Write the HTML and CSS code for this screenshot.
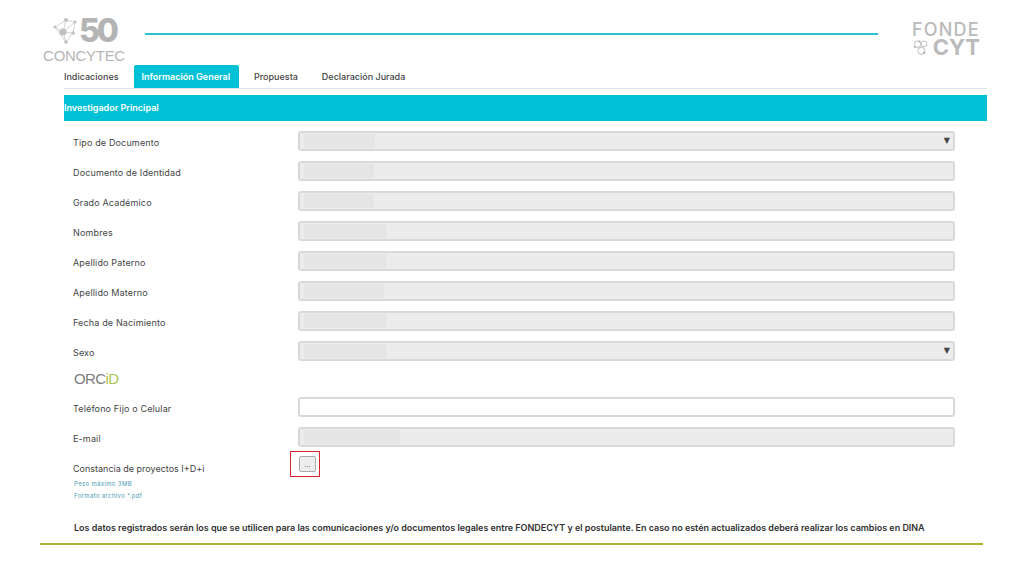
FILE: index.html
```html
<!DOCTYPE html>
<html lang="es">
<head>
    <meta charset="UTF-8">
    <meta name="viewport" content="width=device-width, initial-scale=1.0">
    <title>Información General - FONDECYT</title>
    <link rel="stylesheet" href="styles.css">
</head>
<body>
    <!-- Header -->
    <header class="header">
        <div class="logo-concytec">
            <div class="logo-top">
                <svg class="logo-net" width="26" height="28" viewBox="0 0 26 28">
                    <path d="M14 3 L3 10 L11 15 L23 5 L14 3 M11 15 L14 3 M11 15 L21 16 L14 25 L11 15 M23 5 L21 16 M3 10 L14 25" stroke="#d4d4d4" stroke-width="1" fill="none"/>
                    <g fill="#c0c0c0">
                        <circle cx="14" cy="3" r="2"/>
                        <circle cx="23" cy="5" r="1.5"/>
                        <circle cx="3" cy="10" r="1.6"/>
                        <circle cx="11" cy="15" r="3.6"/>
                        <circle cx="21" cy="16" r="1.8"/>
                        <circle cx="14" cy="25" r="1.8"/>
                    </g>
                </svg>
                <span class="logo-fifty">50</span>
            </div>
            <div class="logo-name">CONCYTEC</div>
        </div>
        <div class="header-line"></div>
        <div class="logo-fondecyt">
            <div class="fonde">FONDE</div>
            <div class="cyt-row">
                <svg width="17" height="17" viewBox="0 0 17 17">
                    <g fill="none" stroke="#cbcbcb" stroke-width="1.2">
                        <circle cx="5" cy="5" r="3.4"/>
                        <circle cx="12" cy="4.5" r="3"/>
                        <circle cx="9" cy="12" r="3.6"/>
                    </g>
                    <g fill="#b0b0b0">
                        <circle cx="2" cy="8" r="1.1"/>
                        <circle cx="7" cy="2" r="1.1"/>
                        <circle cx="12" cy="14" r="1.3"/>
                    </g>
                </svg>
                <span class="cyt">CYT</span>
            </div>
        </div>
    </header>

    <!-- Tabs -->
    <nav class="tabs">
        <a href="#" class="tab">Indicaciones</a>
        <a href="#" class="tab tab-active">Información General</a>
        <a href="#" class="tab">Propuesta</a>
        <a href="#" class="tab">Declaración Jurada</a>
    </nav>

    <div class="section-title">Investigador Principal</div>

    <!-- Form -->
    <form class="form">
        <div class="row">
            <label>Tipo de Documento</label>
            <div class="field off"><span class="mask w75"></span><span class="arrow">▼</span></div>
        </div>
        <div class="row">
            <label>Documento de Identidad</label>
            <div class="field off"><span class="mask w74"></span></div>
        </div>
        <div class="row">
            <label>Grado Académico</label>
            <div class="field off"><span class="mask w74"></span></div>
        </div>
        <div class="row">
            <label>Nombres</label>
            <div class="field off"><span class="mask w86"></span></div>
        </div>
        <div class="row">
            <label>Apellido Paterno</label>
            <div class="field off"><span class="mask w86"></span></div>
        </div>
        <div class="row">
            <label>Apellido Materno</label>
            <div class="field off"><span class="mask w84"></span></div>
        </div>
        <div class="row">
            <label>Fecha de Nacimiento</label>
            <div class="field off"><span class="mask w86"></span></div>
        </div>
        <div class="row">
            <label>Sexo</label>
            <div class="field off"><span class="mask w86"></span><span class="arrow">▼</span></div>
        </div>

        <div class="orcid">ORC<span class="orcid-id">iD</span></div>

        <div class="row">
            <label>Teléfono Fijo o Celular</label>
            <div class="field"></div>
        </div>
        <div class="row">
            <label>E-mail</label>
            <div class="field off"><span class="mask w100"></span></div>
        </div>

        <div class="row-file">
            <div class="file-info">
                <label>Constancia de proyectos I+D+i</label>
                <p class="hint hint-first">Peso máximo 3MB</p>
                <p class="hint">Formato archivo *.pdf</p>
            </div>
            <div class="file-box"><button type="button" class="file-btn">...</button></div>
        </div>
    </form>

    <p class="note">Los datos registrados serán los que se utilicen para las comunicaciones y/o documentos legales entre FONDECYT y el postulante. En caso no estén actualizados deberá realizar los cambios en DINA</p>

    <div class="footer-line"></div>
</body>
</html>
```

FILE: styles.css
```css
* {
    margin: 0;
    padding: 0;
    box-sizing: border-box;
}

body {
    font-family: Inter, sans-serif;
    color: #444;
    background-color: white;
    overflow: hidden;
}

/* Header */
.header {
    height: 65px;
    padding: 16px 44px 0 43px;
    display: flex;
    align-items: flex-start;
}

.logo-concytec {
    width: 82px;
    color: #b5b5b5;
}

.logo-top {
    display: flex;
    align-items: center;
    gap: 1px;
    height: 30px;
    padding-left: 9px;
}

.logo-fifty {
    font-size: 32px;
    font-weight: 800;
    letter-spacing: -3px;
    color: #b4b4b4;
    line-height: 30px;
}

.logo-name {
    margin-top: 3px;
    font-family: "Liberation Sans", sans-serif;
    font-size: 15px;
    line-height: 14px;
    letter-spacing: -0.3px;
    text-align: center;
}

.header-line {
    flex: 1;
    height: 2px;
    margin: 17px 34px 0 20px;
    background-color: #2cc3d6;
}

.logo-fondecyt {
    width: 68px;
    margin-top: 6px;
    color: #bababa;
}

.fonde {
    font-size: 18px;
    font-weight: 500;
    line-height: 15px;
    letter-spacing: 1.2px;
}

.cyt-row {
    display: flex;
    align-items: center;
    gap: 4px;
    height: 18px;
    margin-top: 1px;
    padding-left: 1px;
}

.cyt {
    font-size: 22px;
    font-weight: 700;
    line-height: 18px;
}

/* Tabs */
.tabs {
    margin: 0 37px 0 64px;
    height: 24px;
    display: flex;
    border-bottom: 1px solid #e2e2e2;
    font-size: 9px;
}

.tab {
    height: 23px;
    line-height: 24px;
    padding: 0 12px;
    color: #444;
    text-decoration: none;
    font-weight: 500;
}

.tab:first-child {
    padding-left: 0;
    padding-right: 15px;
}

.tab-active {
    background-color: #00c0d6;
    color: white;
    font-weight: 600;
    padding: 0 9px 0 8px;
    margin-right: 3px;
    border-radius: 2px 2px 0 0;
}

.section-title {
    margin: 6px 37px 0 64px;
    height: 26px;
    line-height: 26px;
    background-color: #00c0d6;
    color: white;
    font-size: 9px;
    font-weight: 600;
}

/* Form */
.form {
    margin: 10px 69px 0 73px;
}

.row {
    display: flex;
    align-items: center;
    height: 20px;
    margin-bottom: 10px;
}

label {
    display: block;
    font-size: 9px;
    letter-spacing: 0.15px;
    color: #444;
}

.row label {
    width: 225px;
    padding-top: 2px;
}

.field {
    position: relative;
    flex: 1;
    height: 20px;
    padding: 1px 4px;
    border: 2px solid #d9d9d9;
    border-radius: 3px;
    background-color: white;
}

.off {
    background-color: #ececec;
}

.mask {
    display: block;
    height: 14px;
    background-color: #e5e5e5;
}

.w74 { width: 70px; }
.w75 { width: 71px; }
.w84 { width: 80px; }
.w86 { width: 82px; }
.w100 { width: 96px; }

.arrow {
    position: absolute;
    right: 3px;
    top: 2px;
    font-family: "DejaVu Sans", sans-serif;
    font-size: 8px;
    line-height: 12px;
    color: #444;
}

.orcid {
    height: 26px;
    font-family: "Liberation Sans", sans-serif;
    font-size: 15px;
    line-height: 16px;
    padding-left: 1px;
    letter-spacing: -0.6px;
    color: #7d7d7d;
}

.orcid-id {
    color: #a8c94d;
}

.row-file {
    display: flex;
    margin-top: -6px;
}

.file-info {
    width: 217px;
    padding-top: 12px;
}

.file-info label {
    letter-spacing: 0;
}

.file-box {
    width: 30px;
    height: 26px;
    padding: 4px 8px;
    border: 1px solid #d9262c;
}

.file-btn {
    display: block;
    width: 17px;
    height: 16px;
    border: 1px solid #aaa;
    border-radius: 2px;
    background-color: #eee;
    font-size: 8px;
    color: #444;
}

.hint {
    padding-left: 1px;
    font-size: 6px;
    letter-spacing: 0.35px;
    line-height: 12px;
    color: #4a9db5;
}

.hint-first {
    margin-top: 4px;
}

.note {
    margin: 20px 0 0 74px;
    font-size: 9px;
    font-weight: 600;
    letter-spacing: -0.03px;
    color: #333;
    white-space: nowrap;
}

.footer-line {
    height: 2px;
    margin: 10px 41px 0 40px;
    background-color: #a8b02c;
}
```
